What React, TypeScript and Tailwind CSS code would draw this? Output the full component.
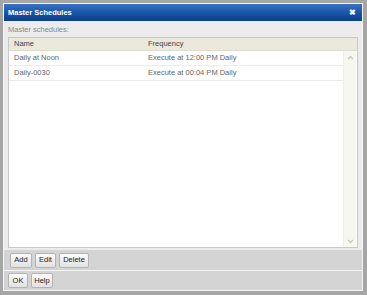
import React from 'react';

const rows = [
  { name: 'Daily at Noon', frequency: 'Execute at 12:00 PM Daily' },
  { name: 'Daily-0030', frequency: 'Execute at 00:04 PM Daily' },
];

const Btn: React.FC<{ label: string; w: string }> = ({ label, w }) => (
  <button
    className={`${w} h-[15px] rounded-[2px] border border-[#b4b4b4] bg-gradient-to-b from-[#fbfbfb] to-[#e2e2e2] text-[7.5px] leading-none text-[#222] flex items-center justify-center`}
  >
    {label}
  </button>
);

export default function App() {
  return (
    <div
      className="w-[367px] h-[295px] bg-[#a6a6a6] pt-[3px] pl-[3px] pr-[4px] pb-[4px]"
      style={{ fontFamily: '"Liberation Sans", Arial, sans-serif' }}
    >
      <div className="w-full h-full border border-[#f4f4f4] flex flex-col bg-[#d4d4d4]">
        {/* title bar */}
        <div className="h-[17px] flex items-center justify-between px-[4px] bg-gradient-to-b from-[#3a73c4] via-[#1a55a8] to-[#0d3f8c]">
          <span className="text-white font-bold text-[7.5px]">Master Schedules</span>
          <span className="text-white font-bold text-[8px] leading-none mr-[2px]">✖</span>
        </div>

        {/* content */}
        <div className="flex-1 flex flex-col bg-[#ececec] px-[4px] pt-[3px] pb-[2px]">
          <div className="text-[7.5px] text-[#888] h-[11px] leading-[11px]">Master schedules:</div>
          <div className="flex-1 border border-[#c8c8c8] bg-white flex flex-col mt-[2px]">
            <div className="h-[13px] bg-[#ebe9db] flex items-center text-[7.5px] text-[#444] border-b border-[#dcdccf]">
              <div className="w-[139px] pl-[5px]">Name</div>
              <div>Frequency</div>
            </div>
            <div className="flex flex-1">
              <div className="flex-1">
                {rows.map((r) => (
                  <div key={r.name} className="h-[15px] flex items-center text-[7.5px] text-[#666] border-b border-[#ececec]">
                    <div className="w-[139px] pl-[5px]">{r.name}</div>
                    <div>{r.frequency}</div>
                  </div>
                ))}
              </div>
              {/* scrollbar */}
              <div className="w-[13px] mr-[1px] flex flex-col justify-between bg-[#f7f7f2] border-l border-[#efefe6]">
                <div className="h-[12px] flex items-center justify-center">
                  <svg width="7" height="5" viewBox="0 0 7 5">
                    <path d="M1 4 L3.5 1.5 L6 4" fill="none" stroke="#c4c4b8" strokeWidth="1.2" />
                  </svg>
                </div>
                <div className="h-[12px] flex items-center justify-center">
                  <svg width="7" height="5" viewBox="0 0 7 5">
                    <path d="M1 1 L3.5 3.5 L6 1" fill="none" stroke="#c4c4b8" strokeWidth="1.2" />
                  </svg>
                </div>
              </div>
            </div>
          </div>
        </div>

        {/* table buttons */}
        <div className="h-[20px] bg-[#d4d4d4] flex items-center gap-[3px] px-[6px]">
          <Btn label="Add" w="w-[22px]" />
          <Btn label="Edit" w="w-[21px]" />
          <Btn label="Delete" w="w-[30px]" />
        </div>
        <div className="h-px bg-[#f4f4f4]" />
        <div className="flex-none h-[19px] bg-[#d4d4d4] flex items-center gap-[3px] px-[4px]">
          <Btn label="OK" w="w-[20px]" />
          <Btn label="Help" w="w-[22px]" />
        </div>
      </div>
    </div>
  );
}
